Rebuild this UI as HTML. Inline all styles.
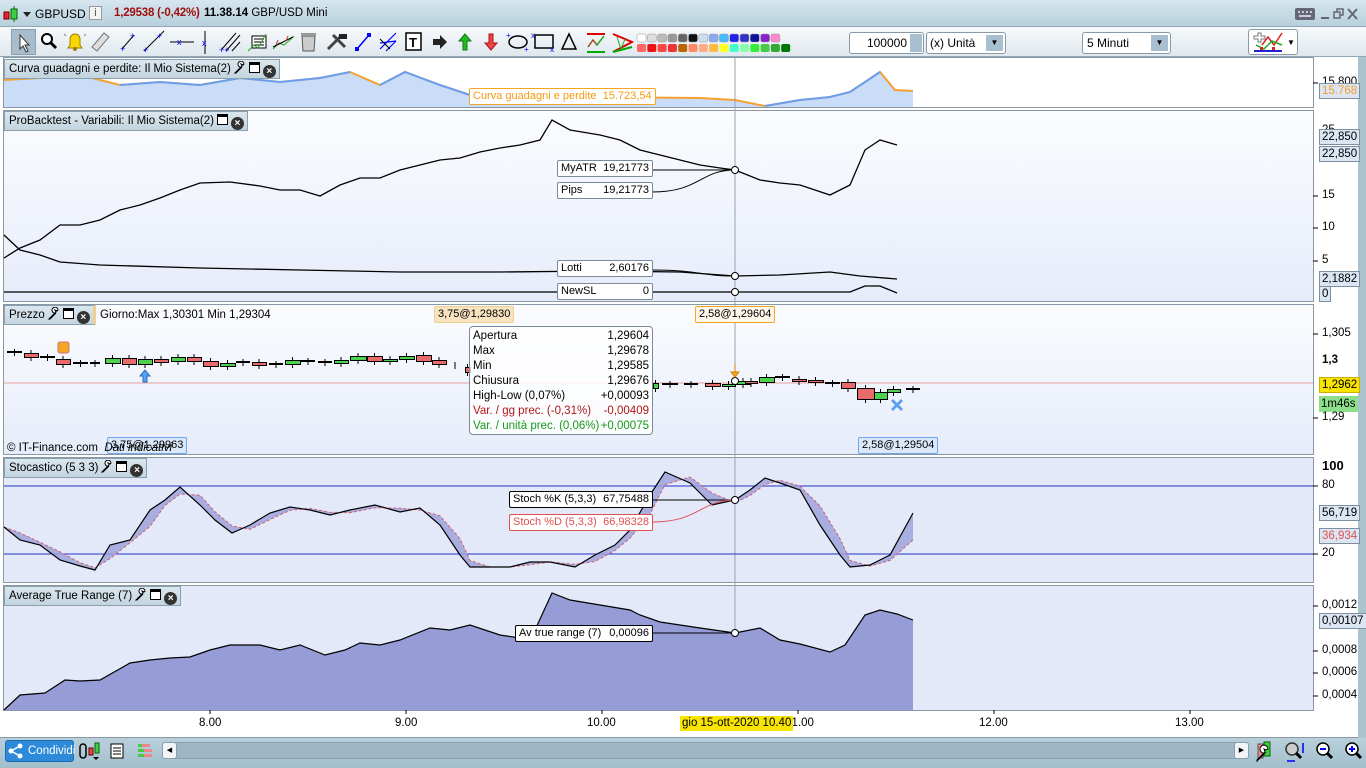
<!DOCTYPE html>
<html><head><meta charset="utf-8"><style>
*{margin:0;padding:0;box-sizing:border-box}
body{width:1366px;height:768px;overflow:hidden;background:#a9c3cf;font-family:"Liberation Sans",sans-serif;font-size:12px;color:#000;position:relative}
.abs{position:absolute}
.lbl{position:absolute;background:#fff;border:1px solid #7a8a99;font-size:11px;padding:0 3px;line-height:15px;border-radius:2px;white-space:nowrap}
.ptitle{position:absolute;left:4px;height:20px;background:linear-gradient(#dbe7ee,#c3d5df);border:1px solid #8aa0ae;font-size:11.5px;line-height:18px;padding-left:4px;padding-right:3px;white-space:nowrap}
.ax{position:absolute;font-size:11.5px;left:1322px}
.vb{position:absolute;left:1319px;border:1px solid #7d8fa0;background:#dce6f2;font-size:11.5px;line-height:14px;padding:0 2px}
.ico{display:inline-block;width:11px;height:11px;border:1.5px solid #000;vertical-align:-1px;margin-left:3px;border-top-width:3px;background:#fff}
.xx{display:inline-block;width:13px;height:13px;border-radius:50%;background:#333;color:#fff;font-size:10px;line-height:13px;text-align:center;vertical-align:-2px;margin-left:3px;font-weight:bold}
.wr{display:inline-block;width:12px;height:13px;vertical-align:-2px;margin-left:3px}
</style></head><body>
<!-- title bar -->
<div class="abs" style="left:0;top:0;width:1366px;height:27px;background:linear-gradient(#d6e6ee,#b7d0dc);border-bottom:1px solid #8fa9b6"></div>
<svg class="abs" style="left:3px;top:6px" width="30" height="16"><rect x="1" y="6" width="5" height="7" fill="#e23" stroke="#600"/><line x1="11" y1="0" x2="11" y2="16" stroke="#060"/><rect x="8" y="3" width="6" height="10" fill="#4c4" stroke="#060"/><path d="M20 6h8l-4 5z" fill="#222"/></svg>
<div class="abs" style="left:35px;top:7px;font-size:12px">GBPUSD</div>
<div class="abs" style="left:89px;top:6px;width:13px;height:14px;background:#f4f4f4;border:1px solid #999;font-size:11px;text-align:center;line-height:12px;color:#555">i</div>
<div class="abs" style="left:114px;top:7px;font-weight:bold;color:#a01010;font-size:11.5px;letter-spacing:-.2px">1,29538 (-0,42%)</div>
<div class="abs" style="left:204px;top:7px;font-size:11.5px"><b>11.38.14</b> GBP/USD Mini</div>
<svg class="abs" style="left:1294px;top:6px" width="66" height="16"><rect x="1" y="2" width="20" height="12" rx="2" fill="#667"/><g fill="#ccd"><rect x="4" y="5" width="2" height="2"/><rect x="8" y="5" width="2" height="2"/><rect x="12" y="5" width="2" height="2"/><rect x="16" y="5" width="2" height="2"/><rect x="5" y="9" width="12" height="2"/></g><rect x="27" y="11" width="8" height="2" fill="#667"/><rect x="40" y="6" width="6" height="6" fill="none" stroke="#667" stroke-width="1.5"/><path d="M43 6V3h6v6h-3" fill="none" stroke="#667" stroke-width="1.5"/><path d="M54 3l9 10M63 3l-9 10" stroke="#667" stroke-width="2"/></svg>
<!-- toolbar -->
<div class="abs" style="left:0;top:27px;width:1366px;height:30px;background:linear-gradient(#f6f9fb,#dfe8ee);border-bottom:1px solid #8fa9b6"></div>
<div class="abs" style="left:11px;top:29px;width:25px;height:26px;background:#a9bccb;border:1px solid #8a9fb0"></div>
<svg class="abs" style="left:0;top:27px" width="640" height="30">
<path d="M20 8v14l3-3 3 6 2-1-3-6h4z" fill="#fff" stroke="#333"/>
<circle cx="47" cy="12" r="5" fill="#fff" stroke="#000" stroke-width="2"/><path d="M51 16l5 5" stroke="#000" stroke-width="3"/>
<path d="M68 21h14l-2-3v-6a5 5 0 0 0-10 0v6z" fill="#f6d800" stroke="#a08000"/><circle cx="75" cy="22" r="2" fill="#a08000"/><path d="M66 9l-2-2M84 9l2-2" stroke="#888"/>
<path d="M92 20l12-14 5 4-12 14z" fill="#ddd" stroke="#777"/>
<g stroke="#000"><path d="M122 22l12-14"/><path d="M144 24l20-20"/><path d="M170 15h24"/><path d="M205 4v23"/><path d="M222 22l14-16M226 24l14-16M232 24l8-9"/></g>
<g fill="#00f" font-size="9" font-family="Liberation Sans"><text x="120" y="25">+</text><text x="130" y="12">+</text><text x="143" y="26">+</text><text x="157" y="12">+</text><text x="177" y="18">x</text><text x="202" y="19">x</text><text x="219" y="26">++</text></g>
<rect x="252" y="9" width="14" height="12" fill="#fff" stroke="#000"/><path d="M254 12h10M254 15h10M254 18h10" stroke="#000"/><path d="M248 24l6-6 4 3 8-14" stroke="#2a2" fill="none"/>
<path d="M273 22l6-6 5 2 6-5 4-4" stroke="#2a2" fill="none"/><path d="M273 20l20-10" stroke="#000"/><path d="M276 18l2-5M286 14l2-5" stroke="#d22"/>
<path d="M302 9h13l-1 15h-11z" fill="#ccc" stroke="#555"/><rect x="301" y="6" width="15" height="3" fill="#999"/>
<path d="M328 22l12-12M333 8l12 12" stroke="#444" stroke-width="3"/><rect x="339" y="7" width="8" height="5" fill="#222"/>
<path d="M357 22l12-14" stroke="#00f" stroke-width="1.5"/><rect x="355" y="20" width="4" height="4" fill="#00f"/><rect x="367" y="6" width="4" height="4" fill="#00f"/>
<path d="M380 22l16-16M380 16l16-2M386 24l10-10" stroke="#00f" stroke-width="1.2"/><path d="M380 12l10 10" stroke="#000"/>
<rect x="406" y="6" width="15" height="17" fill="#fff" stroke="#000" stroke-width="1.5"/><text x="409" y="20" font-size="13" font-weight="bold" font-family="Liberation Sans">T</text>
<path d="M433 12h7v-4l7 7-7 7v-4h-7z" fill="#222"/>
<path d="M465 7l-6 7h4v9h4v-9h4z" fill="#2b2" stroke="#171"/>
<path d="M491 23l-6-7h4V7h4v9h4z" fill="#e44" stroke="#a11"/>
<ellipse cx="518" cy="15" rx="9" ry="6" fill="none" stroke="#000" stroke-width="1.5"/><g fill="#00f" font-size="8"><text x="506" y="11">+</text><text x="524" y="25">+</text></g>
<rect x="535" y="8" width="18" height="13" fill="none" stroke="#000" stroke-width="1.5"/><g fill="#00f" font-size="8"><text x="531" y="11">x</text><text x="550" y="25">x</text></g>
<path d="M569 7l-7 15h14z" fill="none" stroke="#000" stroke-width="1.5"/>
<path d="M587 7h18M587 25h18" stroke-width="2" stroke="#d00"/><path d="M587 25h18" stroke="#0a0" stroke-width="2"/><path d="M588 20l5-7 4 5 7-9" stroke="#2a2" fill="none" stroke-width="1.5"/><path d="M588 20l5-7 4 5" stroke="#d22" fill="none"/>
<path d="M613 7l19 8-19 10" stroke="#d00" fill="none" stroke-width="2"/><path d="M613 25l19-5" stroke="#0a0" stroke-width="2"/><path d="M617 10l4 12 4-10" stroke="#2a2" fill="none"/>
</svg>
<svg class="abs" style="left:636px;top:33px" width="156" height="20" id="swsvg"></svg>
<div class="abs" style="left:849px;top:32px;width:75px;height:22px;background:#fff;border:1px solid #8899a8;border-radius:3px;text-align:right;padding-right:16px;line-height:20px">100000</div>
<div class="abs" style="left:910px;top:34px;width:12px;height:18px;background:#a8bfcf"></div>
<div class="abs" style="left:926px;top:32px;width:80px;height:22px;background:#fff;border:1px solid #8899a8;border-radius:3px;line-height:20px;padding-left:3px">(x) Unità</div>
<div class="abs" style="left:986px;top:35px;width:17px;height:16px;background:#a8bfcf;font-size:8px;text-align:center;line-height:16px">▼</div>
<div class="abs" style="left:1082px;top:32px;width:89px;height:22px;background:#fff;border:1px solid #8899a8;border-radius:3px;line-height:20px;padding-left:4px">5 Minuti</div>
<div class="abs" style="left:1151px;top:35px;width:17px;height:16px;background:#a8bfcf;font-size:8px;text-align:center;line-height:16px">▼</div>
<div class="abs" style="left:1248px;top:29px;width:50px;height:26px;background:#fff;border:1px solid #8899a8;border-radius:3px"></div>
<svg class="abs" style="left:1252px;top:31px" width="32" height="22"><path d="M2 5h4V2h3v3h4v3H9v3H6V8H2z" fill="#fff" stroke="#777"/><path d="M10 14l6-8 6 8 8-12" stroke="#d22" fill="none" stroke-width="1.5"/><path d="M4 14l8 4 8-8 10 4" stroke="#2a2" fill="none" stroke-width="1.5"/><rect x="2" y="19" width="28" height="2" fill="#22c"/><g fill="#d22"><rect x="8" y="16" width="3" height="3"/><rect x="20" y="16" width="3" height="3"/></g></svg>
<div class="abs" style="left:1287px;top:38px;font-size:8px">▼</div>

<!-- chart area -->
<div class="abs" style="left:0;top:57px;width:1358px;height:681px;background:#fff"></div>
<div class="abs" style="left:1358px;top:57px;width:8px;height:681px;background:#a9c3cf"></div>
<svg class="abs" style="left:0;top:0" width="1358" height="738" id="ch">
<defs><linearGradient id="pg" x1="0" y1="0" x2="0" y2="1"><stop offset="0" stop-color="#fbfcfe"/><stop offset="1" stop-color="#e6ecfa"/></linearGradient></defs>
<rect x="3.5" y="57.5" width="1310" height="50" fill="#fff" stroke="#8a98a6"/>
<rect x="3.5" y="110.5" width="1310" height="191" fill="url(#pg)" stroke="#8a98a6"/>
<rect x="3.5" y="304.5" width="1310" height="150" fill="url(#pg)" stroke="#8a98a6"/>
<rect x="3.5" y="457.5" width="1310" height="125" fill="#e3e9f8" stroke="#8a98a6"/>
<rect x="3.5" y="585.5" width="1310" height="125" fill="#e3e9f8" stroke="#8a98a6"/>
<polygon fill="#c9dcf8" points="4,80 40,78 80,75 120,85 160,82 200,85 240,78 280,82 320,78 350,72 380,85 405,72 440,85 470,95 520,97 600,97 700,98 735,100 765,106 800,100 830,97 850,92 880,72 895,90 913,91 913,107 4,107"/>
<polyline fill="none" stroke="#f5a030" stroke-width="2" points="4,80 40,78 80,75 120,85 160,82 200,85 240,78 280,82 320,78 350,72 380,85 405,72 440,85 470,95 520,97 600,97 700,98 735,100 765,106 800,100 830,97 850,92 880,72 895,90 913,91"/>
<polyline fill="none" stroke="#6a9ef0" stroke-width="2" points="120,85 160,82 200,85 240,78 280,82 320,78 350,72"/>
<polyline fill="none" stroke="#6a9ef0" stroke-width="2" points="380,85 405,72 440,85 470,95"/>
<polyline fill="none" stroke="#6a9ef0" stroke-width="2" points="765,106 800,100 830,97 850,92 880,72"/>
<polyline fill="none" stroke="#000" stroke-width="1.3" points="4,258 20,248 40,240 60,225 80,225 100,220 120,210 140,205 160,198 180,190 200,183 230,182 260,186 280,190 300,190 320,196 340,185 360,178 380,178 400,170 420,165 440,160 460,158 480,152 500,148 520,145 540,140 552,120 570,130 600,135 620,140 640,150 660,155 680,160 700,165 720,168 735,170 760,180 780,183 800,185 830,195 850,185 865,150 880,140 897,145"/>
<polyline fill="none" stroke="#000" stroke-width="1.3" points="4,235 20,250 40,255 60,262 100,265 200,268 300,270 400,272 500,272 600,271 680,272 735,276 780,275 830,272 860,276 897,279"/>
<polyline fill="none" stroke="#000" stroke-width="1.3" points="4,292 850,292 865,286 880,286 897,293"/>
<path d="M652 170 C690 170,700 170,735 170 M652 192 C700 192,700 170,735 170 M652 270 C700 270,700 276,735 276 M652 292 L735 292" stroke="#000" fill="none"/>
<line x1="735" y1="58" x2="735" y2="710" stroke="#9aa3ad"/>
<line x1="4" y1="383" x2="1313" y2="383" stroke="#e8a0a0"/>
<g id="cd"></g>
<line x1="4" y1="486" x2="1313" y2="486" stroke="#2233cc"/>
<line x1="4" y1="554" x2="1313" y2="554" stroke="#2233cc"/>
<polygon id="stf" fill="#9ea3dc" fill-opacity=".85"/>
<polyline id="std" fill="none" stroke="#d06070" stroke-dasharray="3,2"/>
<polyline id="stk" fill="none" stroke="#000" stroke-width="1.2"/>
<path d="M652 500 L735 500" stroke="#000" fill="none"/>
<path d="M652 522 C700 522,700 500,735 500" stroke="#e05050" fill="none"/>
<polygon fill="#959cd6" points="4,710 20,695 45,693 65,680 80,681 100,680 130,663 150,660 170,658 190,657 210,650 230,645 260,645 280,650 300,645 325,655 345,650 360,643 380,645 400,640 430,628 450,630 470,625 500,635 520,638 535,630 552,593 570,600 600,605 630,610 640,615 660,622 680,625 700,628 735,633 760,628 780,640 800,644 830,652 845,645 865,615 880,610 897,614 913,620 913,710"/>
<polyline fill="none" stroke="#000" stroke-width="1.2" points="4,710 20,695 45,693 65,680 80,681 100,680 130,663 150,660 170,658 190,657 210,650 230,645 260,645 280,650 300,645 325,655 345,650 360,643 380,645 400,640 430,628 450,630 470,625 500,635 520,638 535,630 552,593 570,600 600,605 630,610 640,615 660,622 680,625 700,628 735,633 760,628 780,640 800,644 830,652 845,645 865,615 880,610 897,614 913,620"/>
<line x1="652" y1="633" x2="735" y2="633" stroke="#000"/>
<g fill="#fff" stroke="#000"><circle cx="735" cy="170" r="3.5"/><circle cx="735" cy="276" r="3.5"/><circle cx="735" cy="292" r="3.5"/><circle cx="735" cy="381" r="3.5"/><circle cx="735" cy="500" r="3.5"/><circle cx="735" cy="633" r="3.5"/></g>
<rect x="58" y="342" width="11" height="11" rx="2" fill="#f5a623" stroke="#c77"/>
<path d="M145 370l-5 6h3v6h4v-6h3z" fill="#5aa0f0" stroke="#2a6fc0"/>
<path d="M735 364v8h-4l4 5 4-5h-4" fill="#f5a623" stroke="#d08000"/>
<path d="M893 399l4 4 4-4 2 2-4 4 4 4-2 2-4-4-4 4-2-2 4-4-4-4z" fill="#5aa0f0"/>
<g stroke="#000"><line x1="1313" y1="83" x2="1318" y2="83"/><line x1="1313" y1="196" x2="1318" y2="196"/><line x1="1313" y1="228" x2="1318" y2="228"/><line x1="1313" y1="261" x2="1318" y2="261"/><line x1="1313" y1="334" x2="1318" y2="334"/><line x1="1313" y1="418" x2="1318" y2="418"/><line x1="1313" y1="486" x2="1318" y2="486"/><line x1="1313" y1="554" x2="1318" y2="554"/><line x1="1313" y1="606" x2="1318" y2="606"/><line x1="1313" y1="651" x2="1318" y2="651"/><line x1="1313" y1="673" x2="1318" y2="673"/><line x1="1313" y1="696" x2="1318" y2="696"/>
<line x1="210" y1="710" x2="210" y2="714"/><line x1="406" y1="710" x2="406" y2="714"/><line x1="602" y1="710" x2="602" y2="714"/><line x1="798" y1="710" x2="798" y2="714"/><line x1="994" y1="710" x2="994" y2="714"/><line x1="1190" y1="710" x2="1190" y2="714"/></g>
<line x1="0" y1="737.5" x2="1358" y2="737.5" stroke="#8a98a6"/>
</svg>

<div class="ptitle" style="top:59px">Curva guadagni e perdite: Il Mio Sistema(2)<svg class="wr" viewBox="0 0 12 13"><path d="M2 12l6-6a3 3 0 1 1 2-3l-1 1-2-1 1 2-1 1-6 6z" fill="#fff" stroke="#000"/></svg><span class="ico"></span><span class="xx">×</span></div>
<div class="ptitle" style="top:111px">ProBacktest - Variabili: Il Mio Sistema(2)<span class="ico"></span><span class="xx">×</span></div>
<div class="ptitle" style="top:305px;border-right:3px solid #f0d090">Prezzo<svg class="wr" viewBox="0 0 12 13"><path d="M2 12l6-6a3 3 0 1 1 2-3l-1 1-2-1 1 2-1 1-6 6z" fill="#fff" stroke="#000"/></svg><span class="ico"></span><span class="xx">×</span></div>
<div class="abs" style="left:100px;top:309px;font-size:11.5px">Giorno:Max 1,30301 Min 1,29304</div>
<div class="ptitle" style="top:458px">Stocastico (5 3 3)<svg class="wr" viewBox="0 0 12 13"><path d="M2 12l6-6a3 3 0 1 1 2-3l-1 1-2-1 1 2-1 1-6 6z" fill="#fff" stroke="#000"/></svg><span class="ico"></span><span class="xx">×</span></div>
<div class="ptitle" style="top:586px">Average True Range (7)<svg class="wr" viewBox="0 0 12 13"><path d="M2 12l6-6a3 3 0 1 1 2-3l-1 1-2-1 1 2-1 1-6 6z" fill="#fff" stroke="#000"/></svg><span class="ico"></span><span class="xx">×</span></div>

<div class="lbl" style="left:469px;top:88px;border-color:#f5a623;color:#f59a10;background:#fff">Curva guadagni e perdite &nbsp;15.723,54</div>
<div class="lbl" style="left:557px;top:160px;width:96px">MyATR<span style="float:right">19,21773</span></div>
<div class="lbl" style="left:557px;top:182px;width:96px">Pips<span style="float:right">19,21773</span></div>
<div class="lbl" style="left:557px;top:260px;width:96px">Lotti<span style="float:right">2,60176</span></div>
<div class="lbl" style="left:557px;top:283px;width:96px">NewSL<span style="float:right">0</span></div>
<div class="lbl" style="left:434px;top:306px;background:#f8e3c0;border-color:#f0d090">3,75@1,29830</div>
<div class="lbl" style="left:695px;top:306px;background:#fff8ea;border-color:#f5a623">2,58@1,29604</div>
<div class="lbl" style="left:107px;top:437px;background:#dbe8fa;border-color:#70a8f0">3,75@1,29963</div>
<div class="lbl" style="left:858px;top:437px;background:#dbe8fa;border-color:#70a8f0">2,58@1,29504</div>
<div class="abs" style="left:7px;top:442px;font-size:11.5px">© IT-Finance.com &nbsp;<i>Dati indicativi</i></div>
<div class="abs" style="left:469px;top:326px;width:184px;height:109px;background:rgba(255,255,255,.8);border:1px solid #7a8a99;border-radius:4px;font-size:11.5px;line-height:15px;padding:2px 3px">
<div>Apertura<span style="float:right">1,29604</span></div><div>Max<span style="float:right">1,29678</span></div><div>Min<span style="float:right">1,29585</span></div><div>Chiusura<span style="float:right">1,29676</span></div><div>High-Low (0,07%)<span style="float:right">+0,00093</span></div><div style="color:#b01818">Var. / gg prec. (-0,31%)<span style="float:right">-0,00409</span></div><div style="color:#1a9a1a">Var. / unità prec. (0,06%)<span style="float:right">+0,00075</span></div></div>
<div class="lbl" style="left:509px;top:491px;width:144px;border-color:#000">Stoch %K (5,3,3)<span style="float:right">67,75488</span></div>
<div class="lbl" style="left:509px;top:514px;width:144px;border-color:#e05050;color:#e05050">Stoch %D (5,3,3)<span style="float:right">66,98328</span></div>
<div class="lbl" style="left:515px;top:625px;width:138px;border-color:#000">Av true range (7)<span style="float:right">0,00096</span></div>

<div class="ax" style="top:76px">15.800</div>
<div class="vb" style="top:83px;color:#f5a030">15.768</div>
<div class="ax" style="top:124px">25</div>
<div class="vb" style="top:129px">22,850</div>
<div class="vb" style="top:146px">22,850</div>
<div class="ax" style="top:189px">15</div>
<div class="ax" style="top:221px">10</div>
<div class="ax" style="top:254px">5</div>
<div class="vb" style="top:271px">2,1882</div>
<div class="vb" style="top:286px">0</div>
<div class="ax" style="top:327px">1,305</div>
<div class="ax" style="top:354px;font-weight:bold">1,3</div>
<div class="vb" style="top:377px;background:#f7e400;border-color:#c8b000;left:1319px">1,2962</div>
<div class="abs" style="left:1319px;top:396px;background:#8ce08c;padding:0 2px;font-size:11.5px;line-height:16px">1m46s</div>
<div class="ax" style="top:411px">1,29</div>
<div class="ax" style="top:458px;font-weight:bold;font-size:13px">100</div>
<div class="ax" style="top:479px">80</div>
<div class="vb" style="top:505px">56,719</div>
<div class="vb" style="top:528px;color:#e05050">36,934</div>
<div class="ax" style="top:547px">20</div>
<div class="ax" style="top:599px">0,0012</div>
<div class="vb" style="top:613px">0,00107</div>
<div class="ax" style="top:644px">0,0008</div>
<div class="ax" style="top:666px">0,0006</div>
<div class="ax" style="top:689px">0,0004</div>
<div class="abs" style="left:199px;top:717px;font-size:11.5px">8.00</div>
<div class="abs" style="left:395px;top:717px;font-size:11.5px">9.00</div>
<div class="abs" style="left:587px;top:717px;font-size:11.5px">10.00</div>
<div class="abs" style="left:786px;top:717px;font-size:11.5px">11.00</div>
<div class="abs" style="left:979px;top:717px;font-size:11.5px">12.00</div>
<div class="abs" style="left:1175px;top:717px;font-size:11.5px">13.00</div>
<div class="abs" style="left:680px;top:716px;background:#f7e400;font-size:11.5px;padding:0 2px;line-height:15px">gio 15-ott-2020 10.40</div>

<div class="abs" style="left:0;top:738px;width:1366px;height:30px;background:linear-gradient(#b8d0dc,#a3bfcc)"></div>
<div class="abs" style="left:5px;top:740px;width:69px;height:22px;background:#2d8ad8;border:1px solid #1c6bb0;border-radius:3px;color:#fff;font-size:11.5px;line-height:20px;padding-left:22px;white-space:nowrap">Condividi</div>
<svg class="abs" style="left:8px;top:743px" width="16" height="16"><g fill="#fff"><circle cx="3" cy="8" r="2.5"/><circle cx="12" cy="3" r="2.5"/><circle cx="12" cy="13" r="2.5"/></g><path d="M3 8L12 3M3 8l9 5" stroke="#fff" stroke-width="1.5"/></svg>
<svg class="abs" style="left:78px;top:740px" width="80" height="22"><rect x="2" y="4" width="6" height="14" rx="3" fill="none" stroke="#000" stroke-width="1.5"/><rect x="11" y="8" width="4" height="7" fill="#e44" stroke="#600"/><rect x="17" y="3" width="4" height="10" fill="#4c4" stroke="#060"/><path d="M15 17h6l-3 3z" fill="#000"/><rect x="33" y="4" width="12" height="14" fill="#fff" stroke="#000"/><path d="M35 8h8M35 11h8M35 14h8" stroke="#000"/><rect x="60" y="4" width="8" height="3" fill="#4c4"/><rect x="64" y="4" width="8" height="3" fill="#e88"/><rect x="60" y="9" width="8" height="3" fill="#4c4"/><rect x="66" y="9" width="8" height="3" fill="#e88"/><rect x="60" y="14" width="8" height="3" fill="#4c4"/><rect x="66" y="14" width="8" height="3" fill="#e88"/></svg>
<div class="abs" style="left:162px;top:742px;width:1087px;height:17px;background:#9fb7c4;border:1px solid #8aa0ae;border-radius:3px"></div>
<div class="abs" style="left:162px;top:742px;width:15px;height:17px;background:#f2f5f7;border:1px solid #8aa0ae;border-radius:3px;font-size:7px;text-align:center;line-height:15px">◀</div>
<div class="abs" style="left:1234px;top:742px;width:15px;height:17px;background:#f2f5f7;border:1px solid #8aa0ae;border-radius:3px;font-size:7px;text-align:center;line-height:15px">▶</div>
<svg class="abs" style="left:1254px;top:739px" width="110" height="26">
<rect x="4" y="5" width="5" height="14" fill="#e88" stroke="#555"/><rect x="10" y="3" width="6" height="14" fill="#4c4" stroke="#060"/><path d="M3 22l8-8a4 4 0 1 1 3-4l-2 1-2-1 1 3-8 8z" fill="#fff" stroke="#000"/>
<circle cx="38" cy="10" r="6" fill="#ccc" stroke="#333" stroke-width="1.5"/><path d="M42 14l5 5" stroke="#000" stroke-width="3"/><path d="M33 22h8M49 4v10" stroke="#00f" stroke-width="1.5"/>
<circle cx="69" cy="10" r="6" fill="#fff" stroke="#000" stroke-width="1.5"/><path d="M73 14l5 5" stroke="#000" stroke-width="3"/><path d="M66 10h6" stroke="#00f" stroke-width="2"/>
<circle cx="98" cy="10" r="6" fill="#fff" stroke="#000" stroke-width="1.5"/><path d="M102 14l5 5" stroke="#000" stroke-width="3"/><path d="M95 10h6M98 7v6" stroke="#00f" stroke-width="2"/>
</svg>

<script>
var top1=["#fff","#ddd","#bbb","#999","#666","#111","#cde","#8ae","#4bf","#22e","#33c","#119","#82c","#f8c"];
var bot=["#f66","#e11","#f44","#e33","#b60","#f86","#fa8","#fb4","#ff2","#4fc","#8fa","#3e3","#4c4","#3a3","#070"];
var s="";
top1.forEach(function(c,i){s+='<rect x="'+(i*10.3+1)+'" y="1" width="9" height="8" rx="2" fill="'+c+'" stroke="#999" stroke-width=".5"/>';});
bot.forEach(function(c,i){s+='<rect x="'+(i*10.3+1)+'" y="11" width="9" height="8" rx="2" fill="'+c+'"/>';});
document.getElementById("swsvg").innerHTML=s;
var C=[[7,22,352,352,'k'],[24,38,353,357,'r'],[40,55,357,357,'k'],[56,70,359,364,'r'],[73,88,363,363,'k'],[90,100,363,363,'k'],[105,120,358,363,'g'],[122,136,358,364,'r'],[138,152,359,364,'g'],[154,168,359,362,'r'],[171,185,357,361,'g'],[187,201,357,361,'r'],[203,218,361,366,'r'],[220,235,363,366,'g'],[236,250,362,362,'k'],[252,266,362,365,'r'],[269,283,364,364,'k'],[285,300,360,364,'g'],[301,315,361,361,'k'],[318,332,362,362,'k'],[334,348,360,363,'g'],[350,366,356,360,'g'],[367,382,356,361,'r'],[383,397,359,361,'g'],[399,414,356,359,'g'],[416,431,355,361,'r'],[432,446,360,364,'r'],[448,462,365,365,'r'],[465,470,367,372,'r'],
[653,658,383,388,'g'],[662,678,384,384,'k'],[684,698,384,384,'k'],[705,720,383,386,'r'],[722,735,384,386,'g'],[736,750,381,384,'g'],[745,757,381,383,'r'],[759,774,377,382,'g'],[775,790,377,377,'k'],[792,806,379,381,'r'],[808,823,380,382,'r'],[825,840,383,383,'k'],[841,855,382,388,'r'],[857,874,388,399,'r'],[874,887,392,399,'g'],[887,900,389,392,'g'],[906,920,389,389,'k']];
var h="";
C.forEach(function(c){var m=(c[0]+c[1])/2;h+='<line x1="'+m+'" y1="'+(c[2]-3)+'" x2="'+m+'" y2="'+(c[3]+4)+'" stroke="#000"/>';
if(c[4]=='k')h+='<rect x="'+c[0]+'" y="'+(c[2]-1)+'" width="'+(c[1]-c[0])+'" height="2" fill="#000"/>';
else h+='<rect x="'+c[0]+'.5" y="'+c[2]+'.5" width="'+(c[1]-c[0])+'" height="'+(c[3]-c[2])+'" fill="'+(c[4]=='g'?'#4cd24c':'#e86a6a')+'" stroke="#000"/>';});
document.getElementById("cd").innerHTML=h;
var K=[[4,527],[20,540],[40,545],[60,560],[80,566],[95,570],[110,545],[130,540],[150,510],[165,500],[180,487],[200,505],[215,520],[232,533],[250,525],[270,513],[290,507],[310,510],[330,515],[350,510],[375,505],[400,512],[420,508],[440,525],[460,555],[470,567],[490,567],[510,567],[530,562],[550,562],[575,567],[595,555],[615,545],[630,530],[650,495],[665,472],[690,483],[712,505],[735,500],[750,490],[765,478],[780,483],[800,490],[820,525],[840,555],[850,567],[870,565],[890,555],[913,513]];
var D=K.map(function(p,i){var q=K[Math.max(0,i-1)];return [p[0],(p[1]+q[1]*1.2)/2.2];});
D[D.length-1]=[913,540];
var ks=K.map(function(p){return p.join(",")}).join(" "),ds=D.map(function(p){return p.join(",")}).join(" ");
document.getElementById("stk").setAttribute("points",ks);
document.getElementById("std").setAttribute("points",ds);
document.getElementById("stf").setAttribute("points",ks+" "+D.slice().reverse().map(function(p){return p.join(",")}).join(" "));
</script>
</body></html>
